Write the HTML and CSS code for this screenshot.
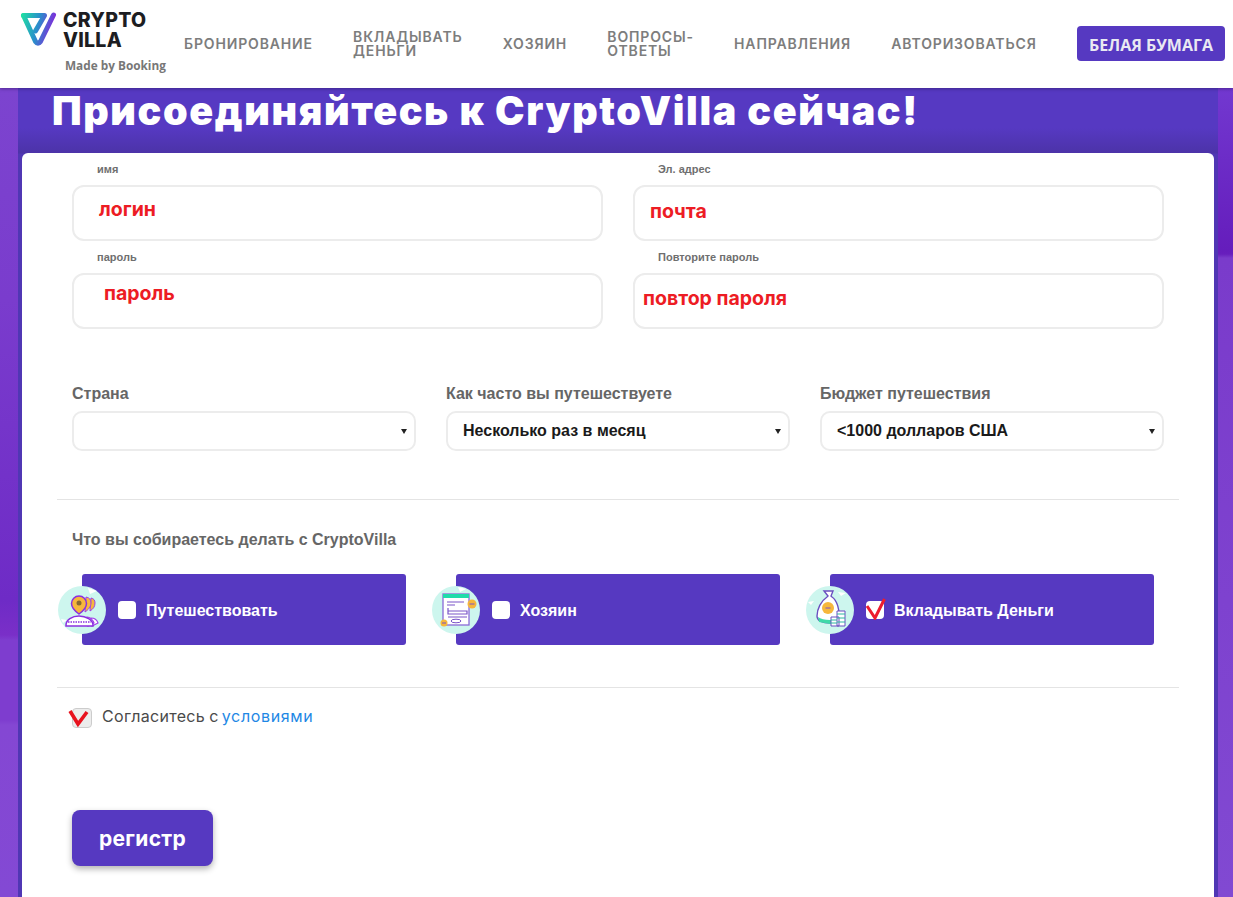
FILE: index.html
```html
<!DOCTYPE html>
<html lang="ru">
<head>
<meta charset="utf-8">
<title>CryptoVilla</title>
<link rel="stylesheet" href="styles.css">
</head>
<body>
<header class="topbar">
  <div class="brand">
    <div class="brand-row">
      <svg class="brand-mark" width="38" height="38" viewBox="0 0 38 38">
        <defs><linearGradient id="lg" gradientUnits="userSpaceOnUse" x1="2" y1="6" x2="36" y2="14"><stop offset="0" stop-color="#1fdca4"/><stop offset=".5" stop-color="#2a8ecb"/><stop offset="1" stop-color="#8a1fdc"/></linearGradient></defs>
        <path d="M3.500 5.500L15.500 31.500Q18 35 20.500 31.500L33.500 5" fill="none" stroke="url(#lg)" stroke-width="5" stroke-linejoin="round" stroke-linecap="round"/>
        <path d="M3.500 5.500H24.500L15.500 21" fill="none" stroke="url(#lg)" stroke-width="5" stroke-linejoin="round" stroke-linecap="round"/>
      </svg>
      <div class="brand-name">CRYPTO<br>VILLA</div>
    </div>
    <div class="brand-sub">Made by Booking</div>
  </div>
  <nav class="nav">
    <a class="nav-link">БРОНИРОВАНИЕ</a>
    <a class="nav-link nav-two">ВКЛАДЫВАТЬ<br>ДЕНЬГИ</a>
    <a class="nav-link">ХОЗЯИН</a>
    <a class="nav-link nav-two">ВОПРОСЫ-<br>ОТВЕТЫ</a>
    <a class="nav-link">НАПРАВЛЕНИЯ</a>
    <a class="nav-link">АВТОРИЗОВАТЬСЯ</a>
    <a class="paper-btn">БЕЛАЯ БУМАГА</a>
  </nav>
</header>

<main class="page">
  <section class="panel">
    <h1 class="title">Присоединяйтесь к CryptoVilla сейчас!</h1>
    <form class="card">
      <div class="grid-two">
        <div class="field">
          <label class="mini-label">имя</label>
          <div class="input"><span class="scrawl scrawl-a">логин</span></div>
        </div>
        <div class="field">
          <label class="mini-label">Эл. адрес</label>
          <div class="input"><span class="scrawl scrawl-b">почта</span></div>
        </div>
        <div class="field">
          <label class="mini-label">пароль</label>
          <div class="input"><span class="scrawl scrawl-c">пароль</span></div>
        </div>
        <div class="field">
          <label class="mini-label">Повторите пароль</label>
          <div class="input"><span class="scrawl scrawl-d">повтор пароля</span></div>
        </div>
      </div>

      <div class="grid-three">
        <div class="sel-field"><label class="sel-label">Страна</label><div class="select"><span></span><i class="caret"></i></div></div>
        <div class="sel-field"><label class="sel-label">Как часто вы путешествуете</label><div class="select"><span>Несколько раз в месяц</span><i class="caret"></i></div></div>
        <div class="sel-field"><label class="sel-label">Бюджет путешествия</label><div class="select"><span>&lt;1000 долларов США</span><i class="caret"></i></div></div>
      </div>

      <hr class="rule rule-one">
      <div class="question">Что вы собираетесь делать с CryptoVilla</div>

      <div class="roles">
        <div class="role">
          <svg class="role-icon" width="48" height="48" viewBox="0 0 48 48">
            <circle cx="24" cy="24" r="24" fill="#cdf6ee"/>
            <path d="M30 2l9 3-7 3zM3 33l6 1-4 3z" fill="#fff"/>
            <path d="M33 32c3 0 6 2 7 5l-6 3z" fill="#fff" stroke="#a040e8" stroke-width="1.200"/>
            <path d="M29 31c3 0 6 3 7 6l-6 3z" fill="#fff" stroke="#a040e8" stroke-width="1.200"/>
            <path d="M33 12a5 5 0 0 1 4 5c0 4-2 6-5 8z" fill="#f6b73c" stroke="#a040e8"/>
            <path d="M28 11a6 6 0 0 1 5 6c0 4-3 7-6 9z" fill="#f6b73c" stroke="#a040e8"/>
            <path d="M21 10a7.500 7.500 0 0 1 7.500 7.500c0 4.500-4 8-7.500 10.500-3.500-2.500-7.500-6-7.500-10.500A7.500 7.500 0 0 1 21 10z" fill="#f6b73c" stroke="#8a30e0" stroke-width="1.500"/>
            <circle cx="21" cy="17" r="2.500" fill="#8a6a30"/>
            <path d="M8 39c0-5 6-9 13-9s14 4 14 9v1H8z" fill="#fff" stroke="#8a30e0" stroke-width="1.500"/>
            <path d="M10 36h23" stroke="#8a30e0" stroke-width="1.500" stroke-dasharray="1.500 1"/>
          </svg>
          <span class="role-box"></span>
          <span class="role-text">Путешествовать</span>
        </div>
        <div class="role">
          <svg class="role-icon" width="48" height="48" viewBox="0 0 48 48">
            <circle cx="24" cy="24" r="24" fill="#cdf6ee"/>
            <path d="M26 1l8 2-6 3z" fill="#fff"/>
            <rect x="11" y="8" width="26" height="31" fill="#fff" stroke="#8a6ad8" stroke-width="1.300"/>
            <rect x="11" y="8" width="26" height="4" fill="#1fdcaa"/>
            <path d="M15 16h17M15 19h8M16 22v6h19v-3H16M16 31h19" stroke="#7a55c8" fill="none" stroke-width="1.200"/>
            <ellipse cx="24" cy="35" rx="5" ry="1.800" fill="#fff" stroke="#7a55c8"/>
            <circle cx="40" cy="18" r="4.500" fill="#f6b73c"/><path d="M37.500 18h5" stroke="#7a55c8"/>
            <circle cx="12" cy="37" r="3.500" fill="#f6b73c"/><path d="M10 37h4" stroke="#7a55c8"/>
          </svg>
          <span class="role-box"></span>
          <span class="role-text">Хозяин</span>
        </div>
        <div class="role">
          <svg class="role-icon" width="48" height="48" viewBox="0 0 48 48">
            <circle cx="24" cy="24" r="24" fill="#cdf6ee"/>
            <path d="M32 6l8 1-5 3zM2 16l6-1-3 4z" fill="#fff"/>
            <path d="M18 5h9l-2 5 1 1c5 3 8 14 7 20 0 3-3 6-8 6-8 0-14-2-14-7 0-7 4-15 10-19l1-1z" fill="#fff" stroke="#6a4fc0" stroke-width="1.400"/>
            <path d="M12 31c4 3 12 4 20 2v2l-8 3-11-2z" fill="#3fd9a8"/>
            <circle cx="22" cy="22" r="6" fill="#f6b73c"/><path d="M19.500 22h5" stroke="#7a55c8"/>
            <path d="M25 31h8v9h-8zM31 25h8v15h-8z" fill="#fff" stroke="#6a4fc0"/>
            <path d="M31 28h8M31 32h8M31 36h8M25 34h6M25 37h6" stroke="#2fb8a0"/>
          </svg>
          <span class="role-box"><svg class="tick" width="22" height="22" viewBox="0 0 22 22"><path d="M2 8L10 20L19.500 1" fill="none" stroke="#ed1c2e" stroke-width="3"/></svg></span>
          <span class="role-text">Вкладывать Деньги</span>
        </div>
      </div>

      <hr class="rule rule-two">
      <div class="agree">
        <span class="agree-box"><svg class="agree-tick" width="22" height="24" viewBox="0 0 22 24"><path d="M2 7L10 20L19 8" fill="none" stroke="#e8121e" stroke-width="3.600"/></svg></span>
        <span class="agree-text">Согласитесь с <a class="agree-link">условиями</a></span>
      </div>
      <button class="submit" type="button">регистр</button>
    </form>
  </section>
</main>
</body>
</html>
```
FILE: styles.css
```css
* { box-sizing: border-box; }
html, body { margin: 0; height: 897px; overflow: hidden; }
body {
  font-family: "Liberation Sans", Arial, sans-serif;
  background:
    linear-gradient(180deg, #7c44cf 88px, #7a3ccd 300px, #6e2bc6 600px, #7a2fc8 635px, #7e3dcf 640px, #7e3dcf 720px, #8447d3 725px, #8349d4 897px) left top / 18px 100% no-repeat,
    linear-gradient(180deg, #7238d0 88px, #651dbc 250px, #671ebd 254px, #7a3bcb 258px, #7e42cf 600px, #8149d2 897px) right top / 15px 100% no-repeat,
    #6c2bc6;
}
.topbar {
  height: 88px;
  background: #fff;
  display: flex;
  box-shadow: 0 1px 3px rgba(40,20,90,.5);
  position: relative;
  z-index: 1;
}
.brand { width: 184px; padding: 10px 0 0 20px; flex: none; }
.brand-row { display: flex; gap: 5px; height: 38px; }
.brand-name {
  font: 800 19.500px/20px Inter, "Open Sans", sans-serif;
  color: #1d1d22;
  letter-spacing: .25px;
}
.brand-sub {
  font: 700 11.800px/16px "Open Sans", sans-serif;
  color: #777;
  margin: 9px 0 0 45px;
  white-space: nowrap;
}
.nav { flex: 1; display: flex; align-items: center; padding-right: 8px; }
.nav-link {
  font: 600 14px/14px Inter, "Open Sans", sans-serif;
  color: #7d7d7d;
  letter-spacing: .85px;
  margin-right: 40.200px;
  white-space: nowrap;
}
.paper-btn {
  margin-left: auto;
  height: 35px;
  padding: 3px 12px 0;
  display: flex;
  align-items: center;
  background: #5639c1;
  color: #e9e9f2;
  border-radius: 4px;
  font: 700 16px "Open Sans", sans-serif;
  white-space: nowrap;
  margin-top: -1px;
  flex: none;
}
.page { padding: 0 15px 0 18px; }
.panel {
  height: 809px;
  padding: 0 4px;
  background: linear-gradient(180deg, #5639c2 0, #5639c2 40px, #4c33a8 65px, #5037b4 66px);
}
.title {
  margin: 0;
  height: 65px;
  padding-left: 30px;
  font: 900 39.500px/46px Inter, "Open Sans", sans-serif;
  letter-spacing: 1.600px;
  color: #fff;
  white-space: nowrap;
}
.card {
  height: 760px;
  background: #fff;
  border-radius: 6px;
  padding: 8px 50px 0;
}
.grid-two {
  display: grid;
  grid-template-columns: 1fr 1fr;
  column-gap: 30px;
}
.field { height: 88px; }
.mini-label {
  display: block;
  height: 24px;
  padding-left: 25px;
  font: 700 11px/16px "Liberation Sans", sans-serif;
  color: #6f6f6f;
}
.input {
  height: 56px;
  border: 2px solid #ececec;
  border-radius: 12px;
}
.scrawl {
  display: block;
  color: #ed1c24;
  font: 700 19.500px/20px Inter, "Liberation Sans", sans-serif;
  white-space: nowrap;
}
.scrawl-a { padding: 12px 0 0 25px; }
.scrawl-b { padding: 14px 0 0 15px; }
.scrawl-c { padding: 8px 0 0 30px; }
.scrawl-d { padding: 13px 0 0 8px; }
.grid-three {
  display: grid;
  grid-template-columns: repeat(3, 1fr);
  column-gap: 30px;
  margin-top: 43px;
}
.sel-label {
  display: block;
  height: 31px;
  font: 700 16px/28px "Liberation Sans", sans-serif;
  color: #666;
}
.select {
  height: 40px;
  border: 2px solid #ececec;
  border-radius: 10px;
  padding: 0 7px 0 15px;
  display: flex;
  align-items: center;
  justify-content: space-between;
  font: 700 16px "Liberation Sans", sans-serif;
  color: #1a1a1a;
}
.caret {
  width: 0; height: 0;
  border: 3.500px solid transparent;
  border-top: 5px solid #222;
  border-bottom: 0;
}
.rule { border: 0; border-top: 1px solid #e4e4e4; margin: 0 -15px; }
.rule-one { margin-top: 48px; }
.rule-two { margin-top: 42px; }
.question {
  margin-top: 30px;
  height: 20px;
  font: 700 16px/20px "Liberation Sans", sans-serif;
  color: #666;
}
.roles {
  margin-top: 24px;
  display: grid;
  grid-template-columns: repeat(3, 1fr);
  column-gap: 50px;
  padding-left: 10px;
  width: 1082px;
}
.role {
  height: 71px;
  background: #5639c1;
  border-radius: 3px;
  display: flex;
  align-items: center;
  padding-left: 36px;
  position: relative;
}
.role-icon { position: absolute; left: -24px; top: 12px; }
.role-box {
  width: 18px; height: 18px;
  background: #fff;
  border-radius: 4px;
  margin-right: 10px;
  position: relative;
  flex: none;
}
.tick { position: absolute; left: -1px; top: -3px; }
.role-text { font: 700 16px "Liberation Sans", sans-serif; color: #fff; padding-top: 2px; }
.agree { display: flex; align-items: center; margin-top: 17px; height: 24px; }
.agree-box {
  width: 20px; height: 20px;
  background: #ececec;
  border: 1px solid #ccc;
  border-radius: 4px;
  margin: 2px 10px 0 0;
  position: relative;
  flex: none;
}
.agree-tick { position: absolute; left: -5px; top: -5px; }
.agree-text { font: 400 16px/24px Inter, "Open Sans", sans-serif; letter-spacing: .3px; word-spacing: -.6px; color: #4a4a4a; padding-bottom: 2px; }
.agree-link { color: #1e88e5; margin-left: -1px; letter-spacing: .65px; }
.submit {
  display: block;
  margin-top: 81px;
  width: 141px;
  height: 56px;
  background: #5639c1;
  color: #fff;
  border: 0;
  border-radius: 8px;
  font: 700 21px Inter, "Open Sans", sans-serif;
  letter-spacing: .3px;
  box-shadow: 0 3px 6px rgba(0,0,0,.3);
}
```
